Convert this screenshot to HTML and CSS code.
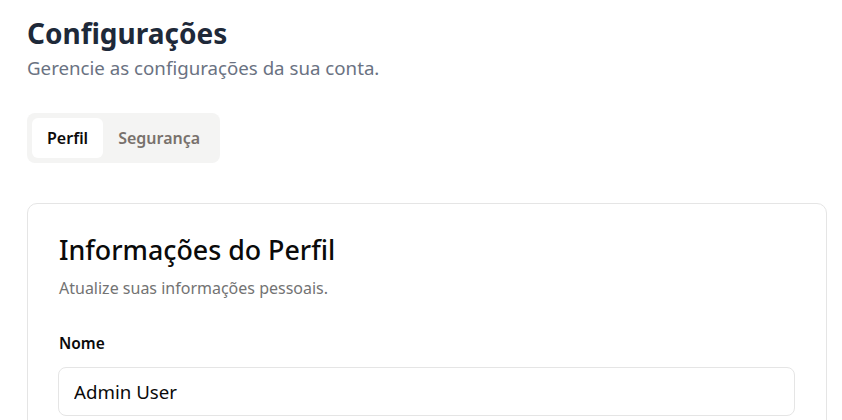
FILE: index.html
```html
<!DOCTYPE html>
<html lang="pt-BR">
<head>
<meta charset="utf-8">
<title>Configurações</title>
<link rel="stylesheet" href="styles.css">
</head>
<body>
<main class="page">
  <header class="page-header">
    <h1 class="page-title">Configurações</h1>
    <p class="page-subtitle">Gerencie as configurações da sua conta.</p>
  </header>
  <nav class="tabs">
    <button class="tab tab-active">Perfil</button>
    <button class="tab">Segurança</button>
  </nav>
  <section class="card">
    <h2 class="card-title">Informações do Perfil</h2>
    <p class="card-desc">Atualize suas informações pessoais.</p>
    <div class="field">
      <label class="field-label" for="nome">Nome</label>
      <input class="field-input" id="nome" type="text" value="Admin User">
    </div>
  </section>
</main>
</body>
</html>
```

FILE: styles.css
```css
* { box-sizing: border-box; }
html, body { margin: 0; padding: 0; background: #ffffff; }
body {
  font-family: "Noto Sans", "Open Sans", sans-serif;
  color: #0a0a0a;
  overflow: hidden;
}
.page {
  padding: 15px 15px 0 27px;
}
.page-title {
  margin: 0;
  font-size: 28px;
  line-height: 36px;
  font-weight: 700;
  color: #1e2939;
}
.page-subtitle {
  margin: 3px 0 0;
  font-size: 18.7px;
  line-height: 28px;
  color: #6a7282;
}
.tabs {
  display: inline-flex;
  margin-top: 31px;
  padding: 5px;
  background: #f4f4f3;
  border-radius: 8px;
}
.tab {
  font-family: inherit;
  border: 0;
  background: transparent;
  height: 40px;
  padding: 0 15px;
  font-size: 16px;
  font-weight: 600;
  color: #78716c;
  border-radius: 6px;
  cursor: pointer;
}
.tab-active {
  background: #ffffff;
  color: #0c0a09;
}
.card {
  margin-top: 40px;
  width: 800px;
  border: 1px solid #e5e5e5;
  border-radius: 10px;
  padding: 28px 31px 0;
  height: 260px;
}
.card-title {
  margin: 0;
  font-size: 26.8px;
  line-height: 36px;
  font-weight: 500;
  color: #0a0a0a;
}
.card-desc {
  margin: 8px 0 0;
  font-size: 16px;
  line-height: 24px;
  color: #737373;
}
.field {
  margin-top: 31px;
  display: flex;
  flex-direction: column;
  gap: 12px;
}
.field-label {
  font-size: 15.5px;
  line-height: 24px;
  font-weight: 600;
  color: #0a0a0a;
}
.field-input {
  width: 737px;
  height: 49px;
  margin-left: -1px;
  border: 1px solid #e5e5e5;
  border-radius: 8px;
  padding: 0 15px;
  font-family: inherit;
  font-size: 18.7px;
  color: #0a0a0a;
  background: #fff;
  outline: none;
}
```
